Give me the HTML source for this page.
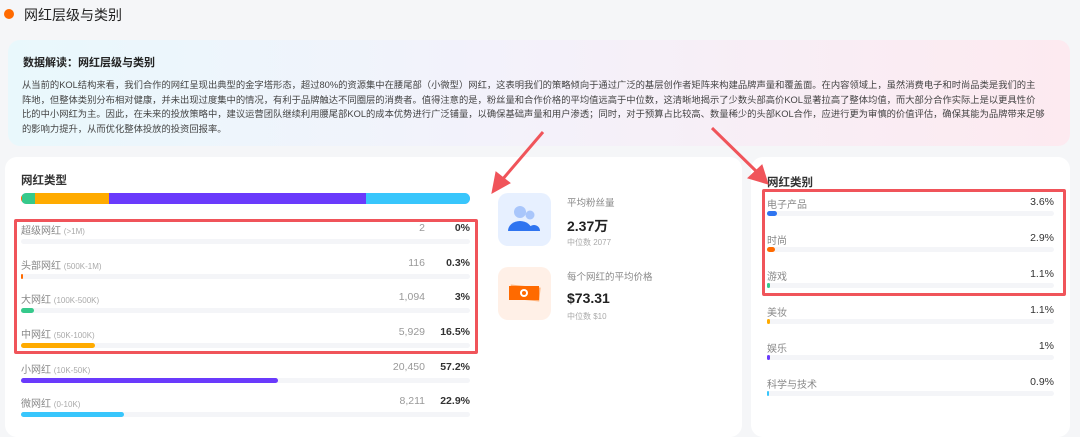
<!DOCTYPE html>
<html><head><meta charset="utf-8"><style>
*{margin:0;padding:0;box-sizing:border-box}
body{width:1080px;height:428px;overflow:hidden;background:#f5f6f8;font-family:"Liberation Sans","Noto Sans CJK SC",sans-serif;position:relative;color:#333}
.abs{position:absolute}
.dot{left:4px;top:9px;width:10px;height:10px;border-radius:50%;background:#ff6a00}
.h{left:24px;top:5px;font-size:14px;color:#222}
.ins{left:8px;top:40px;width:1062px;height:106px;border-radius:12px;background:linear-gradient(90deg,#e9f8fc 0%,#f3f2fb 45%,#fdeaf0 100%)}
.ins .t{position:absolute;left:15px;top:14px;font-size:11px;font-weight:bold;color:#222}
.ins .p{position:absolute;left:14px;top:38px;font-size:9.3px;line-height:14.6px;color:#444;white-space:nowrap}
.card{background:#fff;border-radius:12px}
.ct{font-size:11.5px;font-weight:bold;color:#333}
.row{position:absolute;left:21px;width:449px;font-size:10px;color:#888}
.row .sub{color:#aaa;font-size:8px}
.row .n{position:absolute;right:45px;top:0;color:#999;font-size:10.5px}
.row .pc{position:absolute;right:0;top:0;color:#333;font-weight:bold;font-size:10.5px}
.trk{position:absolute;left:0;top:17px;width:100%;height:5px;background:#f4f5f8;border-radius:3px}
.fill{position:absolute;left:0;top:0;height:5px;border-radius:3px}
.rr{position:absolute;left:767px;width:287px;font-size:10px;color:#888}
.rr .pc{position:absolute;right:0;top:0;color:#333;font-size:10.5px}
.rr .trk{top:15px}
.rbox{border:3px solid #f0545a;border-radius:2px}
</style></head><body>
<div class="abs dot"></div>
<div class="abs h">网红层级与类别</div>
<div class="abs ins">
<div class="t">数据解读：网红层级与类别</div>
<div class="p">从当前的KOL结构来看，我们合作的网红呈现出典型的金字塔形态，超过80%的资源集中在腰尾部（小微型）网红，这表明我们的策略倾向于通过广泛的基层创作者矩阵来构建品牌声量和覆盖面。在内容领域上，虽然消费电子和时尚品类是我们的主<br>阵地，但整体类别分布相对健康，并未出现过度集中的情况，有利于品牌触达不同圈层的消费者。值得注意的是，粉丝量和合作价格的平均值远高于中位数，这清晰地揭示了少数头部高价KOL显著拉高了整体均值，而大部分合作实际上是以更具性价<br>比的中小网红为主。因此，在未来的投放策略中，建议运营团队继续利用腰尾部KOL的成本优势进行广泛铺量，以确保基础声量和用户渗透；同时，对于预算占比较高、数量稀少的头部KOL合作，应进行更为审慎的价值评估，确保其能为品牌带来足够<br>的影响力提升，从而优化整体投放的投资回报率。</div>
</div>
<div class="abs card" style="left:5px;top:157px;width:737px;height:280px"></div>
<div class="abs card" style="left:751px;top:157px;width:319px;height:280px"></div>
<div class="abs ct" style="left:21px;top:172px">网红类型</div>
<div class="abs" style="left:21px;top:193px;width:449px;height:11px;border-radius:6px;overflow:hidden;display:flex;background:#c9b8ff">
<div style="width:1px;background:#ff6a00"></div><div style="width:13px;background:#36c98b"></div><div style="width:74px;background:#ffab00"></div><div style="width:257px;background:#6a3afc"></div><div style="flex:1;background:#38c6fc"></div></div>
<div class="row" style="top:222px">超级网红 <span class="sub">(&gt;1M)</span><span class="n">2</span><span class="pc">0%</span><div class="trk"></div></div>
<div class="row" style="top:257px">头部网红 <span class="sub">(500K-1M)</span><span class="n">116</span><span class="pc">0.3%</span><div class="trk"><div class="fill" style="width:2px;background:#ff6a00"></div></div></div>
<div class="row" style="top:291px">大网红 <span class="sub">(100K-500K)</span><span class="n">1,094</span><span class="pc">3%</span><div class="trk"><div class="fill" style="width:13px;background:#36c98b"></div></div></div>
<div class="row" style="top:326px">中网红 <span class="sub">(50K-100K)</span><span class="n">5,929</span><span class="pc">16.5%</span><div class="trk"><div class="fill" style="width:74px;background:#ffab00"></div></div></div>
<div class="row" style="top:361px">小网红 <span class="sub">(10K-50K)</span><span class="n">20,450</span><span class="pc">57.2%</span><div class="trk"><div class="fill" style="width:257px;background:#6a3afc"></div></div></div>
<div class="row" style="top:395px">微网红 <span class="sub">(0-10K)</span><span class="n">8,211</span><span class="pc">22.9%</span><div class="trk"><div class="fill" style="width:103px;background:#38c6fc"></div></div></div>
<div class="abs rbox" style="left:14px;top:219px;width:464px;height:135px"></div>
<div class="abs" style="left:498px;top:193px;width:53px;height:53px;border-radius:10px;background:#e7f0ff">
<svg width="53" height="53" viewBox="0 0 53 53"><circle cx="22" cy="19" r="6" fill="#a9c6fb"/><circle cx="32" cy="22" r="4.5" fill="#a9c6fb"/><path d="M10 38 a12 10 0 0 1 24 0z" fill="#2f74f0"/><path d="M30 38 a6 6 0 0 1 12 0z" fill="#2f74f0"/></svg></div>
<div class="abs" style="left:498px;top:267px;width:53px;height:53px;border-radius:10px;background:#fff0e7">
<svg width="53" height="53" viewBox="0 0 53 53"><rect x="12" y="19" width="30" height="14" fill="#ffb27a" transform="rotate(6 27 26)"/><rect x="11" y="19" width="30" height="14" fill="#ff6a00"/><circle cx="26" cy="26" r="4" fill="#fff"/><circle cx="26" cy="26" r="2" fill="#ff6a00"/></svg></div>
<div class="abs" style="left:567px;top:195px;font-size:9.5px;color:#888">平均粉丝量</div>
<div class="abs" style="left:567px;top:216px;font-size:14px;font-weight:bold;color:#222">2.37万</div>
<div class="abs" style="left:567px;top:237px;font-size:8px;color:#aaa">中位数 2077</div>
<div class="abs" style="left:567px;top:269px;font-size:9.5px;color:#888">每个网红的平均价格</div>
<div class="abs" style="left:567px;top:290px;font-size:14px;font-weight:bold;color:#222">$73.31</div>
<div class="abs" style="left:567px;top:311px;font-size:8px;color:#aaa">中位数 $10</div>
<div class="abs ct" style="left:767px;top:174px">网红类别</div>
<div class="rr" style="top:196px">电子产品<span class="pc">3.6%</span><div class="trk"><div class="fill" style="width:10px;background:#2f74f0"></div></div></div>
<div class="rr" style="top:232px">时尚<span class="pc">2.9%</span><div class="trk"><div class="fill" style="width:8px;background:#ff6a00"></div></div></div>
<div class="rr" style="top:268px">游戏<span class="pc">1.1%</span><div class="trk"><div class="fill" style="width:3px;background:#36c98b"></div></div></div>
<div class="rr" style="top:304px">美妆<span class="pc">1.1%</span><div class="trk"><div class="fill" style="width:3px;background:#ffab00"></div></div></div>
<div class="rr" style="top:340px">娱乐<span class="pc">1%</span><div class="trk"><div class="fill" style="width:3px;background:#6a3afc"></div></div></div>
<div class="rr" style="top:376px">科学与技术<span class="pc">0.9%</span><div class="trk"><div class="fill" style="width:2px;background:#38c6fc"></div></div></div>
<div class="abs rbox" style="left:762px;top:189px;width:304px;height:107px"></div>
<svg class="abs" style="left:0;top:0" width="1080" height="428"><g fill="#f0545a" stroke="#f0545a">
<line x1="543" y1="132" x2="502" y2="180" stroke-width="3"/><polygon points="492,193 496,172 510,183" stroke-width="1"/>
<line x1="712" y1="128" x2="757" y2="172" stroke-width="3"/><polygon points="768,184 748,178 762,165" stroke-width="1"/>
</g></svg>
</body></html>
